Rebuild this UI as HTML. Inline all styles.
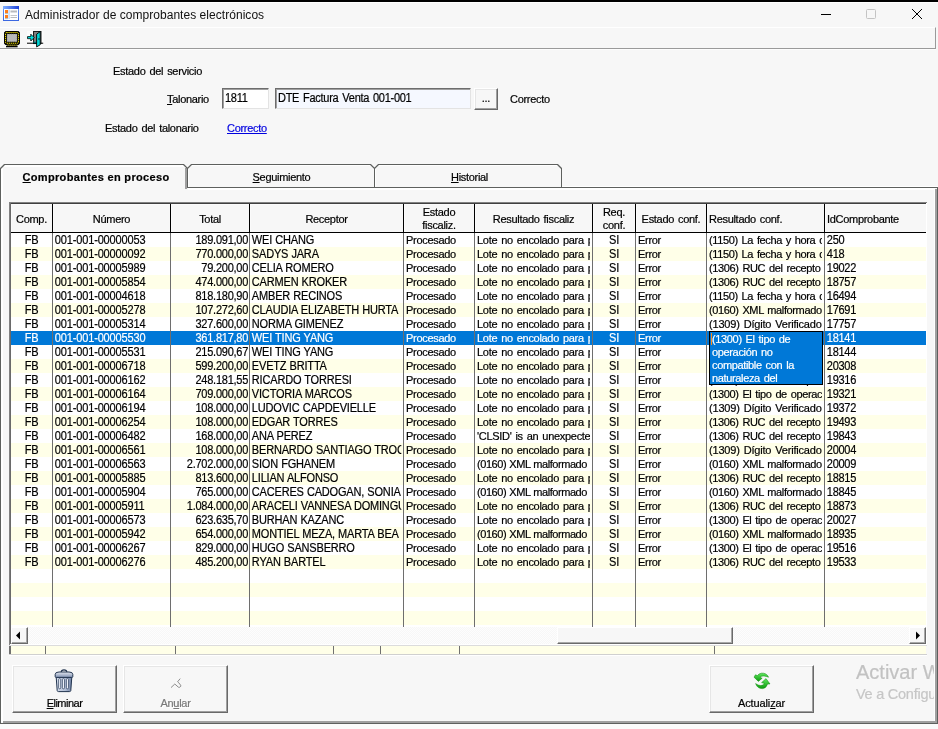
<!DOCTYPE html>
<html lang="es"><head><meta charset="utf-8"><title>Administrador de comprobantes electrónicos</title>
<style>
*{box-sizing:border-box;margin:0;padding:0}
html,body{width:938px;height:729px;overflow:hidden;background:#f7f7f7}
body{position:relative;font-family:"Liberation Sans",sans-serif;font-size:11px;color:#000;letter-spacing:-0.3px;word-spacing:1.2px}
.a{position:absolute}
#topline{position:absolute;left:0;top:0;width:938px;height:2px;background:#000}
#titlebar{position:absolute;left:0;top:2px;width:938px;height:25px;background:#f7f7f7;border-top:1px solid #fff}
#title{position:absolute;left:25px;top:8px;font-size:12px;line-height:14px;letter-spacing:0.04px;word-spacing:0;-webkit-text-stroke-width:0;color:#111;white-space:nowrap}
#toolbar{position:absolute;left:0;top:27px;width:936px;height:22px;border-top:1px solid #fff;border-right:1px solid #9a9a9a;border-bottom:1px solid #9a9a9a;background:#f7f7f7;box-shadow:0 1px 0 #fdfdfd}
.lbl{position:absolute;white-space:nowrap;line-height:13px}
u{text-decoration:underline}
.inp{position:absolute;height:21px;border:1px solid;border-color:#6d6d6d #e3e3e3 #e3e3e3 #6d6d6d;box-shadow:inset 1px 1px 0 #a0a0a0;background:#fff;line-height:13px;padding:3px 0 0 2px;white-space:nowrap;overflow:hidden}
.btn{position:absolute;background:#f7f7f7;border:1px solid;border-color:#fff #696969 #696969 #fff;box-shadow:inset -1px -1px 0 #a0a0a0, inset 1px 1px 0 #e6e6e6;text-align:center;white-space:nowrap}
/* tabs */
.tab{position:absolute;top:164px;height:24px;text-align:center;line-height:13px;padding-top:7px;white-space:nowrap}
#panel{position:absolute;left:1px;top:187px;width:934px;height:537px;border-top:1px solid #fff}
/* grid */
#grid{position:absolute;left:0;top:0;width:938px;height:729px}
.r{position:absolute;left:11px;width:915px}
.rw{background:#fff}.ry{background:#ffffe8}.rs{background:#0078d7}
.vs{position:absolute;top:233px;width:1px;height:394px;background:#6e6e6e}
.h{position:absolute;top:204px;height:28px;line-height:13px;white-space:nowrap;background:#f7f7f7;padding-top:9px;box-shadow:inset 1px 1px 0 #fbfbfb}
.h.h2{padding-top:2px}
.h.c{text-align:center}
.h.l{text-align:left;padding-left:2px}
.d{position:absolute;height:14px;line-height:14px;white-space:nowrap;overflow:hidden}
.d.c{text-align:center}
.d.l{padding-left:2px}
.d.r{text-align:right;padding-right:1px;letter-spacing:-0.25px}
.d.s{color:#fff}
#tip{position:absolute;left:709px;top:331px;width:114px;height:54px;padding-top:1px !important;letter-spacing:-0.35px;background:#0078d7;color:#fff;border:1px solid #000;line-height:13px;padding:0 0 0 2px;white-space:nowrap;overflow:hidden}
#track{background-color:#fdfdfd;background-image:linear-gradient(45deg,#f7f7f7 25%,transparent 25%,transparent 75%,#f7f7f7 75%),linear-gradient(45deg,#f7f7f7 25%,transparent 25%,transparent 75%,#f7f7f7 75%);background-size:2px 2px;background-position:0 0,1px 1px}
.sb{position:absolute;background:#f7f7f7;border:1px solid;border-color:#fff #6a6a6a #6a6a6a #fff;box-shadow:inset -1px -1px 0 #a8a8a8}
.fs{position:absolute;top:646px;width:1px;height:8px;background:#707070}
.hs{position:absolute;top:204px;width:1px;height:28px;background:#000}

#app{-webkit-text-stroke-width:0.2px;position:absolute;left:0;top:0;width:938px;height:729px;will-change:transform}
.d.u{letter-spacing:-0.25px;word-spacing:0.3px}
.d.k{letter-spacing:-0.38px}
.d.n{letter-spacing:-0.25px}
#caret{position:absolute;left:711px;top:333px;width:1px;height:12px;background:#ff8a1a}
.d.x{letter-spacing:-0.45px;word-spacing:0.6px}
.d.y{letter-spacing:-0.2px}
.d.b{font-size:12px;transform:scaleX(0.917)}
.d.b.l{transform-origin:0 0}
.d.b.c{transform-origin:50% 0}
.d.b.r{transform-origin:100% 0;letter-spacing:-0.27px}
.d.b.u{letter-spacing:-0.2px;word-spacing:0.33px}
.d.b.n{letter-spacing:-0.17px}
.bt{display:inline-block;font-size:12px;transform:scaleX(0.917);transform-origin:0 0}

</style></head><body>
<div id="app">
<div id="topline"></div>
<div id="titlebar"></div>
<div id="title">Administrador de comprobantes electrónicos</div>
<div id="toolbar"></div>
<div class="lbl" style="left:113px;top:65px">Estado del servicio</div>
<div class="lbl" style="left:167px;top:93px"><u>T</u>alonario</div>
<div class="inp" style="left:222px;top:88px;width:47px"><span class="bt">1811</span></div>
<div class="inp" style="left:275px;top:88px;width:196px;background:#f5f8ff"><span class="bt">DTE Factura Venta 001-001</span></div>
<div class="btn" style="left:474px;top:88px;width:24px;height:22px;line-height:18px">...</div>
<div class="lbl" style="left:510px;top:93px">Correcto</div>
<div class="lbl" style="left:105px;top:122px">Estado del talonario</div>
<div class="lbl" style="left:227px;top:122px;color:#0000e0"><u>Correcto</u></div>
<!-- title icon -->
<svg class="a" style="left:3px;top:6px" width="16" height="15" viewBox="0 0 16 15">
 <defs><linearGradient id="tg" x1="0" y1="0" x2="1" y2="0"><stop offset="0" stop-color="#7fb0ff"/><stop offset="1" stop-color="#1c3fd8"/></linearGradient>
 <linearGradient id="tg2" x1="0" y1="0" x2="0" y2="1"><stop offset="0" stop-color="#6a9cff"/><stop offset="1" stop-color="#3a66e0"/></linearGradient></defs>
 <rect x="0" y="0" width="16" height="15" fill="url(#tg2)"/>
 <rect x="0" y="0" width="16" height="3" fill="url(#tg)"/>
 <rect x="1" y="3" width="14" height="11" fill="#fff"/>
 <rect x="2" y="4" width="3" height="3" fill="#ff7d1a"/>
 <rect x="2" y="9" width="3" height="3" fill="#ff7d1a"/>
 <rect x="2" y="7.3" width="3" height="0.8" fill="#9aa"/>
 <rect x="2" y="12.3" width="3" height="0.8" fill="#9aa"/>
 <rect x="5.6" y="3.5" width="0.9" height="9.5" fill="#9fc0f5"/>
 <rect x="7.5" y="4.5" width="6.5" height="2" fill="#b9bcc0"/>
 <rect x="7.5" y="9" width="6.5" height="1" fill="#c4c7ca"/>
 <rect x="7.5" y="11" width="6.5" height="1" fill="#b9bcc0"/>
</svg>
<!-- monitor icon -->
<svg class="a" style="left:4px;top:31px" width="16" height="17" viewBox="0 0 16 17">
 <rect x="0.5" y="0.5" width="15" height="13" rx="1.6" fill="#000" stroke="#000"/>
 <rect x="1.6" y="1.6" width="12.8" height="10.6" rx="0.8" fill="none" stroke="#ffee00" stroke-width="1" stroke-dasharray="1.3 0.7"/>
 <rect x="3" y="3" width="10" height="7.8" fill="#b8b8b8"/>
 <rect x="3" y="3" width="10" height="7.8" fill="none" stroke="#666" stroke-width="0.6" stroke-dasharray="0.8 1.2"/>
 <rect x="2.6" y="13" width="10.8" height="1.8" fill="#000"/>
 <path d="M3.6 14.1 H12.6" fill="none" stroke="#ffee00" stroke-width="0.8" stroke-dasharray="1.2 0.8"/>
 <rect x="2" y="15" width="11.6" height="1.3" fill="#000"/>
</svg>
<!-- door icon -->
<svg class="a" style="left:27px;top:31px" width="17" height="17" viewBox="0 0 17 17">
 <rect x="0" y="0" width="16.4" height="16.4" fill="#fcfcfc"/>
 <rect x="6.6" y="0.4" width="7.4" height="12.2" fill="#7f7f7f" stroke="#000" stroke-width="0.9"/>
 <rect x="6.4" y="10.7" width="3.2" height="1.7" fill="#009a9a"/>
 <rect x="0" y="11.7" width="16.2" height="1" fill="#000"/>
 <path d="M9.6 3.2 L13.2 0.6 V13.8 L9.6 15.9 Z" fill="#00d8d8" stroke="#000" stroke-width="0.9" stroke-linejoin="miter"/>
 <rect x="11.5" y="7.2" width="0.9" height="1.6" fill="#000"/>
 <path d="M0.5 5.6 H3.8 V3.2 L7.2 6.6 L3.8 10 V7.7 H0.5 Z" fill="#00e5e5" stroke="#000" stroke-width="0.8"/>
</svg>
<!-- window controls -->
<div class="a" style="left:821px;top:14px;width:10px;height:1px;background:#000"></div>
<div class="a" style="left:866px;top:9px;width:10px;height:10px;border:1px solid #c4c4c4;border-radius:1.5px"></div>
<svg class="a" style="left:911px;top:8px" width="12" height="12" viewBox="0 0 12 12"><path d="M1 1 L11 11 M11 1 L1 11" stroke="#000" stroke-width="1" fill="none"/></svg>
<!-- watermark -->
<div class="a" style="left:856px;top:660px;font-size:20px;line-height:24px;letter-spacing:0;word-spacing:0;color:#c2c2c2;white-space:nowrap">Activar W</div>
<div class="a" style="left:856px;top:685px;font-size:14.5px;line-height:18px;letter-spacing:-0.25px;word-spacing:0;color:#c6c6c6;white-space:nowrap">Ve a Configu</div>

<div id="grid">
<div class="r rw" style="top:233px;height:14px"></div>
<div class="r ry" style="top:247px;height:14px"></div>
<div class="r rw" style="top:261px;height:14px"></div>
<div class="r ry" style="top:275px;height:14px"></div>
<div class="r rw" style="top:289px;height:14px"></div>
<div class="r ry" style="top:303px;height:14px"></div>
<div class="r rw" style="top:317px;height:14px"></div>
<div class="r rs" style="top:331px;height:14px"></div>
<div class="r rw" style="top:345px;height:14px"></div>
<div class="r ry" style="top:359px;height:14px"></div>
<div class="r rw" style="top:373px;height:14px"></div>
<div class="r ry" style="top:387px;height:14px"></div>
<div class="r rw" style="top:401px;height:14px"></div>
<div class="r ry" style="top:415px;height:14px"></div>
<div class="r rw" style="top:429px;height:14px"></div>
<div class="r ry" style="top:443px;height:14px"></div>
<div class="r rw" style="top:457px;height:14px"></div>
<div class="r ry" style="top:471px;height:14px"></div>
<div class="r rw" style="top:485px;height:14px"></div>
<div class="r ry" style="top:499px;height:14px"></div>
<div class="r rw" style="top:513px;height:14px"></div>
<div class="r ry" style="top:527px;height:14px"></div>
<div class="r rw" style="top:541px;height:14px"></div>
<div class="r ry" style="top:555px;height:14px"></div>
<div class="r rw" style="top:569px;height:14px"></div>
<div class="r ry" style="top:583px;height:14px"></div>
<div class="r rw" style="top:597px;height:14px"></div>
<div class="r ry" style="top:611px;height:14px"></div>
<div class="r rw" style="top:625px;height:2px"></div>
<div class="vs" style="left:52px"></div>
<div class="vs" style="left:170px"></div>
<div class="vs" style="left:249px"></div>
<div class="vs" style="left:403px"></div>
<div class="vs" style="left:474px"></div>
<div class="vs" style="left:592px"></div>
<div class="vs" style="left:635px"></div>
<div class="vs" style="left:706px"></div>
<div class="vs" style="left:824px"></div>
<div class="hs" style="left:52px"></div>
<div class="hs" style="left:170px"></div>
<div class="hs" style="left:249px"></div>
<div class="hs" style="left:403px"></div>
<div class="hs" style="left:474px"></div>
<div class="hs" style="left:592px"></div>
<div class="hs" style="left:635px"></div>
<div class="hs" style="left:706px"></div>
<div class="hs" style="left:824px"></div>
<div class="h c" style="left:11px;width:41px"><span>Comp.</span></div>
<div class="h c" style="left:53px;width:117px"><span>Número</span></div>
<div class="h c" style="left:171px;width:78px"><span>Total</span></div>
<div class="h c" style="left:250px;width:153px"><span>Receptor</span></div>
<div class="h c h2" style="left:404px;width:70px"><span>Estado<br>fiscaliz.</span></div>
<div class="h c" style="left:475px;width:117px"><span>Resultado fiscaliz</span></div>
<div class="h c h2" style="left:593px;width:42px"><span>Req.<br>conf.</span></div>
<div class="h c" style="left:636px;width:70px"><span>Estado conf.</span></div>
<div class="h l" style="left:707px;width:117px"><span>Resultado conf.</span></div>
<div class="h l" style="left:825px;width:101px"><span>IdComprobante</span></div>
<div class="d c b" style="left:11px;top:233px;width:41px">FB</div>
<div class="d l b n" style="left:53px;top:233px;width:125.41px">001-001-00000053</div>
<div class="d r b" style="left:171px;top:233px;width:78px">189.091,00</div>
<div class="d l b u" style="left:250px;top:233px;width:164.67px">WEI CHANG</div>
<div class="d l" style="left:404px;top:233px;width:68px">Procesado</div>
<div class="d l" style="left:475px;top:233px;width:115px">Lote no encolado para p</div>
<div class="d c b" style="left:593px;top:233px;width:42px">SI</div>
<div class="d l" style="left:636px;top:233px;width:68px">Error</div>
<div class="d l k" style="left:707px;top:233px;width:115px">(1150) La fecha y hora d</div>
<div class="d l b" style="left:825px;top:233px;width:107.96px">250</div>
<div class="d c b" style="left:11px;top:247px;width:41px">FB</div>
<div class="d l b n" style="left:53px;top:247px;width:125.41px">001-001-00000092</div>
<div class="d r b" style="left:171px;top:247px;width:78px">770.000,00</div>
<div class="d l b u" style="left:250px;top:247px;width:164.67px">SADYS JARA</div>
<div class="d l" style="left:404px;top:247px;width:68px">Procesado</div>
<div class="d l" style="left:475px;top:247px;width:115px">Lote no encolado para p</div>
<div class="d c b" style="left:593px;top:247px;width:42px">SI</div>
<div class="d l" style="left:636px;top:247px;width:68px">Error</div>
<div class="d l k" style="left:707px;top:247px;width:115px">(1150) La fecha y hora d</div>
<div class="d l b" style="left:825px;top:247px;width:107.96px">418</div>
<div class="d c b" style="left:11px;top:261px;width:41px">FB</div>
<div class="d l b n" style="left:53px;top:261px;width:125.41px">001-001-00005989</div>
<div class="d r b" style="left:171px;top:261px;width:78px">79.200,00</div>
<div class="d l b u" style="left:250px;top:261px;width:164.67px">CELIA ROMERO</div>
<div class="d l" style="left:404px;top:261px;width:68px">Procesado</div>
<div class="d l" style="left:475px;top:261px;width:115px">Lote no encolado para p</div>
<div class="d c b" style="left:593px;top:261px;width:42px">SI</div>
<div class="d l" style="left:636px;top:261px;width:68px">Error</div>
<div class="d l k" style="left:707px;top:261px;width:115px">(1306) RUC del recepto</div>
<div class="d l b" style="left:825px;top:261px;width:107.96px">19022</div>
<div class="d c b" style="left:11px;top:275px;width:41px">FB</div>
<div class="d l b n" style="left:53px;top:275px;width:125.41px">001-001-00005854</div>
<div class="d r b" style="left:171px;top:275px;width:78px">474.000,00</div>
<div class="d l b u" style="left:250px;top:275px;width:164.67px">CARMEN KROKER</div>
<div class="d l" style="left:404px;top:275px;width:68px">Procesado</div>
<div class="d l" style="left:475px;top:275px;width:115px">Lote no encolado para p</div>
<div class="d c b" style="left:593px;top:275px;width:42px">SI</div>
<div class="d l" style="left:636px;top:275px;width:68px">Error</div>
<div class="d l k" style="left:707px;top:275px;width:115px">(1306) RUC del recepto</div>
<div class="d l b" style="left:825px;top:275px;width:107.96px">18757</div>
<div class="d c b" style="left:11px;top:289px;width:41px">FB</div>
<div class="d l b n" style="left:53px;top:289px;width:125.41px">001-001-00004618</div>
<div class="d r b" style="left:171px;top:289px;width:78px">818.180,90</div>
<div class="d l b u" style="left:250px;top:289px;width:164.67px">AMBER RECINOS</div>
<div class="d l" style="left:404px;top:289px;width:68px">Procesado</div>
<div class="d l" style="left:475px;top:289px;width:115px">Lote no encolado para p</div>
<div class="d c b" style="left:593px;top:289px;width:42px">SI</div>
<div class="d l" style="left:636px;top:289px;width:68px">Error</div>
<div class="d l k" style="left:707px;top:289px;width:115px">(1150) La fecha y hora d</div>
<div class="d l b" style="left:825px;top:289px;width:107.96px">16494</div>
<div class="d c b" style="left:11px;top:303px;width:41px">FB</div>
<div class="d l b n" style="left:53px;top:303px;width:125.41px">001-001-00005278</div>
<div class="d r b" style="left:171px;top:303px;width:78px">107.272,60</div>
<div class="d l b u" style="left:250px;top:303px;width:164.67px">CLAUDIA ELIZABETH HURTA</div>
<div class="d l" style="left:404px;top:303px;width:68px">Procesado</div>
<div class="d l" style="left:475px;top:303px;width:115px">Lote no encolado para p</div>
<div class="d c b" style="left:593px;top:303px;width:42px">SI</div>
<div class="d l" style="left:636px;top:303px;width:68px">Error</div>
<div class="d l k" style="left:707px;top:303px;width:115px">(0160) XML malformado</div>
<div class="d l b" style="left:825px;top:303px;width:107.96px">17691</div>
<div class="d c b" style="left:11px;top:317px;width:41px">FB</div>
<div class="d l b n" style="left:53px;top:317px;width:125.41px">001-001-00005314</div>
<div class="d r b" style="left:171px;top:317px;width:78px">327.600,00</div>
<div class="d l b u" style="left:250px;top:317px;width:164.67px">NORMA GIMENEZ</div>
<div class="d l" style="left:404px;top:317px;width:68px">Procesado</div>
<div class="d l" style="left:475px;top:317px;width:115px">Lote no encolado para p</div>
<div class="d c b" style="left:593px;top:317px;width:42px">SI</div>
<div class="d l" style="left:636px;top:317px;width:68px">Error</div>
<div class="d l k y" style="left:707px;top:317px;width:115px">(1309) Dígito Verificado</div>
<div class="d l b" style="left:825px;top:317px;width:107.96px">17757</div>
<div class="d c b s" style="left:11px;top:331px;width:41px">FB</div>
<div class="d l b s n" style="left:53px;top:331px;width:125.41px">001-001-00005530</div>
<div class="d r b s" style="left:171px;top:331px;width:78px">361.817,80</div>
<div class="d l b s u" style="left:250px;top:331px;width:164.67px">WEI TING YANG</div>
<div class="d l s" style="left:404px;top:331px;width:68px">Procesado</div>
<div class="d l s" style="left:475px;top:331px;width:115px">Lote no encolado para p</div>
<div class="d c b s" style="left:593px;top:331px;width:42px">SI</div>
<div class="d l s" style="left:636px;top:331px;width:68px">Error</div>
<div class="d l b s" style="left:825px;top:331px;width:107.96px">18141</div>
<div class="d c b" style="left:11px;top:345px;width:41px">FB</div>
<div class="d l b n" style="left:53px;top:345px;width:125.41px">001-001-00005531</div>
<div class="d r b" style="left:171px;top:345px;width:78px">215.090,67</div>
<div class="d l b u" style="left:250px;top:345px;width:164.67px">WEI TING YANG</div>
<div class="d l" style="left:404px;top:345px;width:68px">Procesado</div>
<div class="d l" style="left:475px;top:345px;width:115px">Lote no encolado para p</div>
<div class="d c b" style="left:593px;top:345px;width:42px">SI</div>
<div class="d l" style="left:636px;top:345px;width:68px">Error</div>
<div class="d l b" style="left:825px;top:345px;width:107.96px">18144</div>
<div class="d c b" style="left:11px;top:359px;width:41px">FB</div>
<div class="d l b n" style="left:53px;top:359px;width:125.41px">001-001-00006718</div>
<div class="d r b" style="left:171px;top:359px;width:78px">599.200,00</div>
<div class="d l b u" style="left:250px;top:359px;width:164.67px">EVETZ BRITTA</div>
<div class="d l" style="left:404px;top:359px;width:68px">Procesado</div>
<div class="d l" style="left:475px;top:359px;width:115px">Lote no encolado para p</div>
<div class="d c b" style="left:593px;top:359px;width:42px">SI</div>
<div class="d l" style="left:636px;top:359px;width:68px">Error</div>
<div class="d l b" style="left:825px;top:359px;width:107.96px">20308</div>
<div class="d c b" style="left:11px;top:373px;width:41px">FB</div>
<div class="d l b n" style="left:53px;top:373px;width:125.41px">001-001-00006162</div>
<div class="d r b" style="left:171px;top:373px;width:78px">248.181,55</div>
<div class="d l b u" style="left:250px;top:373px;width:164.67px">RICARDO TORRESI</div>
<div class="d l" style="left:404px;top:373px;width:68px">Procesado</div>
<div class="d l" style="left:475px;top:373px;width:115px">Lote no encolado para p</div>
<div class="d c b" style="left:593px;top:373px;width:42px">SI</div>
<div class="d l" style="left:636px;top:373px;width:68px">Error</div>
<div class="d l k" style="left:707px;top:373px;width:115px">(1306) RUC del recepto</div>
<div class="d l b" style="left:825px;top:373px;width:107.96px">19316</div>
<div class="d c b" style="left:11px;top:387px;width:41px">FB</div>
<div class="d l b n" style="left:53px;top:387px;width:125.41px">001-001-00006164</div>
<div class="d r b" style="left:171px;top:387px;width:78px">709.000,00</div>
<div class="d l b u" style="left:250px;top:387px;width:164.67px">VICTORIA MARCOS</div>
<div class="d l" style="left:404px;top:387px;width:68px">Procesado</div>
<div class="d l" style="left:475px;top:387px;width:115px">Lote no encolado para p</div>
<div class="d c b" style="left:593px;top:387px;width:42px">SI</div>
<div class="d l" style="left:636px;top:387px;width:68px">Error</div>
<div class="d l k" style="left:707px;top:387px;width:115px">(1300) El tipo de operac</div>
<div class="d l b" style="left:825px;top:387px;width:107.96px">19321</div>
<div class="d c b" style="left:11px;top:401px;width:41px">FB</div>
<div class="d l b n" style="left:53px;top:401px;width:125.41px">001-001-00006194</div>
<div class="d r b" style="left:171px;top:401px;width:78px">108.000,00</div>
<div class="d l b u" style="left:250px;top:401px;width:164.67px">LUDOVIC CAPDEVIELLE</div>
<div class="d l" style="left:404px;top:401px;width:68px">Procesado</div>
<div class="d l" style="left:475px;top:401px;width:115px">Lote no encolado para p</div>
<div class="d c b" style="left:593px;top:401px;width:42px">SI</div>
<div class="d l" style="left:636px;top:401px;width:68px">Error</div>
<div class="d l k y" style="left:707px;top:401px;width:115px">(1309) Dígito Verificado</div>
<div class="d l b" style="left:825px;top:401px;width:107.96px">19372</div>
<div class="d c b" style="left:11px;top:415px;width:41px">FB</div>
<div class="d l b n" style="left:53px;top:415px;width:125.41px">001-001-00006254</div>
<div class="d r b" style="left:171px;top:415px;width:78px">108.000,00</div>
<div class="d l b u" style="left:250px;top:415px;width:164.67px">EDGAR TORRES</div>
<div class="d l" style="left:404px;top:415px;width:68px">Procesado</div>
<div class="d l" style="left:475px;top:415px;width:115px">Lote no encolado para p</div>
<div class="d c b" style="left:593px;top:415px;width:42px">SI</div>
<div class="d l" style="left:636px;top:415px;width:68px">Error</div>
<div class="d l k" style="left:707px;top:415px;width:115px">(1306) RUC del recepto</div>
<div class="d l b" style="left:825px;top:415px;width:107.96px">19493</div>
<div class="d c b" style="left:11px;top:429px;width:41px">FB</div>
<div class="d l b n" style="left:53px;top:429px;width:125.41px">001-001-00006482</div>
<div class="d r b" style="left:171px;top:429px;width:78px">168.000,00</div>
<div class="d l b u" style="left:250px;top:429px;width:164.67px">ANA PEREZ</div>
<div class="d l" style="left:404px;top:429px;width:68px">Procesado</div>
<div class="d l" style="left:475px;top:429px;width:115px">'CLSID' is an unexpecte</div>
<div class="d c b" style="left:593px;top:429px;width:42px">SI</div>
<div class="d l" style="left:636px;top:429px;width:68px">Error</div>
<div class="d l k" style="left:707px;top:429px;width:115px">(1306) RUC del recepto</div>
<div class="d l b" style="left:825px;top:429px;width:107.96px">19843</div>
<div class="d c b" style="left:11px;top:443px;width:41px">FB</div>
<div class="d l b n" style="left:53px;top:443px;width:125.41px">001-001-00006561</div>
<div class="d r b" style="left:171px;top:443px;width:78px">108.000,00</div>
<div class="d l b u" style="left:250px;top:443px;width:164.67px">BERNARDO SANTIAGO TROC</div>
<div class="d l" style="left:404px;top:443px;width:68px">Procesado</div>
<div class="d l" style="left:475px;top:443px;width:115px">Lote no encolado para p</div>
<div class="d c b" style="left:593px;top:443px;width:42px">SI</div>
<div class="d l" style="left:636px;top:443px;width:68px">Error</div>
<div class="d l k y" style="left:707px;top:443px;width:115px">(1309) Dígito Verificado</div>
<div class="d l b" style="left:825px;top:443px;width:107.96px">20004</div>
<div class="d c b" style="left:11px;top:457px;width:41px">FB</div>
<div class="d l b n" style="left:53px;top:457px;width:125.41px">001-001-00006563</div>
<div class="d r b" style="left:171px;top:457px;width:78px">2.702.000,00</div>
<div class="d l b u" style="left:250px;top:457px;width:164.67px">SION FGHANEM</div>
<div class="d l" style="left:404px;top:457px;width:68px">Procesado</div>
<div class="d l x" style="left:475px;top:457px;width:115px">(0160) XML malformado</div>
<div class="d c b" style="left:593px;top:457px;width:42px">SI</div>
<div class="d l" style="left:636px;top:457px;width:68px">Error</div>
<div class="d l k" style="left:707px;top:457px;width:115px">(0160) XML malformado</div>
<div class="d l b" style="left:825px;top:457px;width:107.96px">20009</div>
<div class="d c b" style="left:11px;top:471px;width:41px">FB</div>
<div class="d l b n" style="left:53px;top:471px;width:125.41px">001-001-00005885</div>
<div class="d r b" style="left:171px;top:471px;width:78px">813.600,00</div>
<div class="d l b u" style="left:250px;top:471px;width:164.67px">LILIAN ALFONSO</div>
<div class="d l" style="left:404px;top:471px;width:68px">Procesado</div>
<div class="d l" style="left:475px;top:471px;width:115px">Lote no encolado para p</div>
<div class="d c b" style="left:593px;top:471px;width:42px">SI</div>
<div class="d l" style="left:636px;top:471px;width:68px">Error</div>
<div class="d l k" style="left:707px;top:471px;width:115px">(1306) RUC del recepto</div>
<div class="d l b" style="left:825px;top:471px;width:107.96px">18815</div>
<div class="d c b" style="left:11px;top:485px;width:41px">FB</div>
<div class="d l b n" style="left:53px;top:485px;width:125.41px">001-001-00005904</div>
<div class="d r b" style="left:171px;top:485px;width:78px">765.000,00</div>
<div class="d l b u" style="left:250px;top:485px;width:164.67px">CACERES CADOGAN, SONIA .</div>
<div class="d l" style="left:404px;top:485px;width:68px">Procesado</div>
<div class="d l x" style="left:475px;top:485px;width:115px">(0160) XML malformado</div>
<div class="d c b" style="left:593px;top:485px;width:42px">SI</div>
<div class="d l" style="left:636px;top:485px;width:68px">Error</div>
<div class="d l k" style="left:707px;top:485px;width:115px">(0160) XML malformado</div>
<div class="d l b" style="left:825px;top:485px;width:107.96px">18845</div>
<div class="d c b" style="left:11px;top:499px;width:41px">FB</div>
<div class="d l b n" style="left:53px;top:499px;width:125.41px">001-001-00005911</div>
<div class="d r b" style="left:171px;top:499px;width:78px">1.084.000,00</div>
<div class="d l b u" style="left:250px;top:499px;width:164.67px">ARACELI VANNESA DOMINGU</div>
<div class="d l" style="left:404px;top:499px;width:68px">Procesado</div>
<div class="d l" style="left:475px;top:499px;width:115px">Lote no encolado para p</div>
<div class="d c b" style="left:593px;top:499px;width:42px">SI</div>
<div class="d l" style="left:636px;top:499px;width:68px">Error</div>
<div class="d l k" style="left:707px;top:499px;width:115px">(1306) RUC del recepto</div>
<div class="d l b" style="left:825px;top:499px;width:107.96px">18873</div>
<div class="d c b" style="left:11px;top:513px;width:41px">FB</div>
<div class="d l b n" style="left:53px;top:513px;width:125.41px">001-001-00006573</div>
<div class="d r b" style="left:171px;top:513px;width:78px">623.635,70</div>
<div class="d l b u" style="left:250px;top:513px;width:164.67px">BURHAN KAZANC</div>
<div class="d l" style="left:404px;top:513px;width:68px">Procesado</div>
<div class="d l" style="left:475px;top:513px;width:115px">Lote no encolado para p</div>
<div class="d c b" style="left:593px;top:513px;width:42px">SI</div>
<div class="d l" style="left:636px;top:513px;width:68px">Error</div>
<div class="d l k" style="left:707px;top:513px;width:115px">(1300) El tipo de operac</div>
<div class="d l b" style="left:825px;top:513px;width:107.96px">20027</div>
<div class="d c b" style="left:11px;top:527px;width:41px">FB</div>
<div class="d l b n" style="left:53px;top:527px;width:125.41px">001-001-00005942</div>
<div class="d r b" style="left:171px;top:527px;width:78px">654.000,00</div>
<div class="d l b u" style="left:250px;top:527px;width:164.67px">MONTIEL MEZA, MARTA BEA</div>
<div class="d l" style="left:404px;top:527px;width:68px">Procesado</div>
<div class="d l x" style="left:475px;top:527px;width:115px">(0160) XML malformado</div>
<div class="d c b" style="left:593px;top:527px;width:42px">SI</div>
<div class="d l" style="left:636px;top:527px;width:68px">Error</div>
<div class="d l k" style="left:707px;top:527px;width:115px">(0160) XML malformado</div>
<div class="d l b" style="left:825px;top:527px;width:107.96px">18935</div>
<div class="d c b" style="left:11px;top:541px;width:41px">FB</div>
<div class="d l b n" style="left:53px;top:541px;width:125.41px">001-001-00006267</div>
<div class="d r b" style="left:171px;top:541px;width:78px">829.000,00</div>
<div class="d l b u" style="left:250px;top:541px;width:164.67px">HUGO SANSBERRO</div>
<div class="d l" style="left:404px;top:541px;width:68px">Procesado</div>
<div class="d l" style="left:475px;top:541px;width:115px">Lote no encolado para p</div>
<div class="d c b" style="left:593px;top:541px;width:42px">SI</div>
<div class="d l" style="left:636px;top:541px;width:68px">Error</div>
<div class="d l k" style="left:707px;top:541px;width:115px">(1300) El tipo de operac</div>
<div class="d l b" style="left:825px;top:541px;width:107.96px">19516</div>
<div class="d c b" style="left:11px;top:555px;width:41px">FB</div>
<div class="d l b n" style="left:53px;top:555px;width:125.41px">001-001-00006276</div>
<div class="d r b" style="left:171px;top:555px;width:78px">485.200,00</div>
<div class="d l b u" style="left:250px;top:555px;width:164.67px">RYAN BARTEL</div>
<div class="d l" style="left:404px;top:555px;width:68px">Procesado</div>
<div class="d l" style="left:475px;top:555px;width:115px">Lote no encolado para p</div>
<div class="d c b" style="left:593px;top:555px;width:42px">SI</div>
<div class="d l" style="left:636px;top:555px;width:68px">Error</div>
<div class="d l k" style="left:707px;top:555px;width:115px">(1306) RUC del recepto</div>
<div class="d l b" style="left:825px;top:555px;width:107.96px">19533</div>
<div id="tip">(1300) El tipo de<br>operación no<br>compatible con la<br>naturaleza del</div>
<div id="caret"></div>
</div>
<!-- grid frame, scrollbar, footer strip -->
<div class="a" style="left:9px;top:202px;width:918px;height:1px;background:#828282"></div>
<div class="a" style="left:10px;top:203px;width:917px;height:1px;background:#404040"></div>
<div class="a" style="left:9px;top:202px;width:1px;height:443px;background:#828282"></div>
<div class="a" style="left:10px;top:203px;width:1px;height:441px;background:#6a6a6a"></div>
<div class="a" style="left:926px;top:203px;width:1px;height:442px;background:#fff"></div>
<div class="a" style="left:10px;top:644px;width:917px;height:1px;background:#fff"></div>
<div class="a" style="left:11px;top:232px;width:915px;height:1px;background:#000"></div>
<!-- scrollbar -->
<div class="a" id="track" style="left:11px;top:627px;width:915px;height:17px"></div>
<div class="sb" style="left:11px;top:627px;width:17px;height:17px"><svg width="15" height="15" viewBox="0 0 15 15" style="position:absolute;left:0;top:0"><path d="M4 7.5 L8 3.5 V11.5 Z" fill="#000"/></svg></div>
<div class="sb" style="left:909px;top:627px;width:17px;height:17px"><svg width="15" height="15" viewBox="0 0 15 15" style="position:absolute;left:0;top:0"><path d="M10 7.5 L6 3.5 V11.5 Z" fill="#000"/></svg></div>
<div class="sb" style="left:557px;top:627px;width:176px;height:17px"></div>
<!-- footer strip -->
<div class="a" style="left:9px;top:645px;width:918px;height:1px;background:#dcdcdc"></div>
<div class="a" style="left:11px;top:646px;width:915px;height:8px;background:#ffffe8"></div>
<div class="a" style="left:9px;top:646px;width:2px;height:8px;background:#707070"></div>
<div class="a" style="left:9px;top:654px;width:918px;height:1px;background:#d0d0d0"></div>
<div class="a" style="left:9px;top:655px;width:918px;height:1px;background:#fff"></div>
<div class="fs" style="left:45px"></div><div class="fs" style="left:175px"></div><div class="fs" style="left:333px"></div><div class="fs" style="left:380px"></div><div class="fs" style="left:459px"></div><div class="fs" style="left:714px"></div>
<!-- tabs + window frame -->
<svg class="a" style="left:0;top:0" width="938" height="729" viewBox="0 0 938 729">
 <g fill="#fff" shape-rendering="crispEdges">
  <rect x="1" y="168" width="2" height="554"/>
  <rect x="4" y="165" width="180" height="2"/>
  <rect x="191" y="165" width="180" height="1"/>
  <rect x="378" y="165" width="180" height="1"/>
  <rect x="188" y="169" width="1" height="18"/>
  <rect x="375" y="169" width="1" height="18"/>
  <rect x="187" y="186" width="0" height="1"/>
  <rect x="562" y="186" width="376" height="1"/>
  <rect x="188" y="188" width="746" height="2"/>
  <rect x="934" y="188" width="1" height="533"/>
  <rect x="0" y="724" width="938" height="5" fill="#fbfbfb"/>
 </g>
 <g fill="#a0a0a0" shape-rendering="crispEdges">
  <rect x="185" y="168" width="2" height="21"/>
  <rect x="935" y="189" width="2" height="534"/>
  <rect x="3" y="721" width="934" height="2"/>
 </g>
 <g fill="#5e605e" shape-rendering="crispEdges">
  <rect x="0" y="168" width="1" height="556"/>
  <rect x="4" y="164" width="180" height="1"/>
  <rect x="191" y="164" width="180" height="1"/>
  <rect x="378" y="164" width="180" height="1"/>
  <rect x="187" y="168" width="1" height="20"/>
  <rect x="374" y="168" width="1" height="20"/>
  <rect x="561" y="168" width="1" height="20"/>
  <rect x="188" y="187" width="750" height="1"/>
  <rect x="937" y="187" width="1" height="537"/>
  <rect x="0" y="723" width="938" height="1"/>
 </g>
 <g stroke="#5e605e" stroke-width="1.2" fill="none">
  <path d="M0.5 168.5 L4.5 164.5"/>
  <path d="M183.5 164.5 L187.5 168.5 L191.5 164.5"/>
  <path d="M370.5 164.5 L374.5 168.5 L378.5 164.5"/>
  <path d="M557.5 164.5 L561.5 168.5"/>
 </g>
</svg>
<div class="tab" style="left:5px;width:182px;font-weight:bold;letter-spacing:0.33px;word-spacing:0"><u>C</u>omprobantes en proceso</div>
<div class="tab" style="left:189px;width:185px"><u>S</u>eguimiento</div>
<div class="tab" style="left:377px;width:185px"><u>H</u>istorial</div>
<div class="btn" style="left:12px;top:665px;width:105px;height:48px"><span class="lbl" style="left:0;width:103px;top:31px;text-align:center;letter-spacing:-0.5px"><u>E</u>liminar</span>
<svg class="a" style="left:41px;top:3px" width="20" height="24" viewBox="0 0 20 24">
 <defs><linearGradient id="bg1" x1="0" y1="0" x2="1" y2="0"><stop offset="0" stop-color="#d4dcea"/><stop offset="0.55" stop-color="#b4c0d6"/><stop offset="1" stop-color="#6f81a3"/></linearGradient>
 <linearGradient id="bg2" x1="0" y1="0" x2="0" y2="1"><stop offset="0" stop-color="#e4e9f2"/><stop offset="1" stop-color="#7f90b0"/></linearGradient></defs>
 <path d="M7.2 3 Q7.2 0.9 10 0.9 Q12.8 0.9 12.8 3" fill="none" stroke="#22344f" stroke-width="1.1"/>
 <path d="M2.2 8 L3.2 21.6 Q3.3 22.6 4.6 22.6 H15.4 Q16.7 22.6 16.8 21.6 L17.8 8 Z" fill="url(#bg1)" stroke="#22344f" stroke-width="1"/>
 <path d="M1.2 7.6 V5.4 Q1.2 3 5 3 H15 Q18.8 3 18.8 5.4 V7.6 Q18.8 8.4 17.8 8.4 H2.2 Q1.2 8.4 1.2 7.6 Z" fill="url(#bg2)" stroke="#22344f" stroke-width="1"/>
 <g fill="#eef2fa" stroke="#2b3d5c" stroke-width="0.7"><rect x="4.6" y="9.6" width="2.1" height="10.2" rx="1"/><rect x="8.4" y="9.6" width="2.1" height="10.2" rx="1"/><rect x="12.4" y="9.6" width="2.1" height="10.2" rx="1"/></g>
</svg></div>
<div class="btn" style="left:123px;top:665px;width:105px;height:48px"><span class="lbl" style="left:0;width:103px;top:31px;text-align:center;color:#7a7a7a;text-shadow:1px 1px 0 #fff;letter-spacing:-0.3px">An<u>u</u>lar</span>
<svg class="a" style="left:46px;top:11px" width="14" height="12" viewBox="0 0 14 12"><path d="M1 10.6 L4.8 7 L8.4 10.2 Q10 10.8 10.8 9.2 Q11 8.2 10 7.2 L7.6 4.8 L10.2 1.6" fill="none" stroke="#808080" stroke-width="0.9"/></svg></div>
<div class="btn" style="left:709px;top:665px;width:105px;height:48px"><span class="lbl" style="left:0;width:103px;top:31px;text-align:center;letter-spacing:-0.12px">Actuali<u>z</u>ar</span>
<svg class="a" style="left:43px;top:6px" width="18" height="18" viewBox="0 0 18 18">
 <defs><linearGradient id="gg" x1="0" y1="0" x2="0" y2="1"><stop offset="0" stop-color="#5fe85f"/><stop offset="1" stop-color="#0d9a0d"/></linearGradient></defs>
 <path d="M15.6 5.2 Q13.4 0.6 8.4 1.2 Q5.6 1.6 4.4 3.6 L2.4 2.8 L1 5.2 L5.4 9.4 L9.2 6.2 L7 5.4 Q8.6 3.6 11 4 Q13.4 4.4 15.6 5.2 Z" fill="url(#gg)" stroke="#0a8a0a" stroke-width="0.5"/>
 <path d="M2.6 11.6 Q4.4 16.8 9.6 16.6 Q13.4 16.2 14.6 12 L17 12 L13 6.6 L8.6 10.6 L11.4 11.4 Q10.4 13.6 7.8 13.6 Q5 13.4 2.6 11.6 Z" fill="url(#gg)" stroke="#0a8a0a" stroke-width="0.5"/>
</svg></div>

</div>
</body></html>
